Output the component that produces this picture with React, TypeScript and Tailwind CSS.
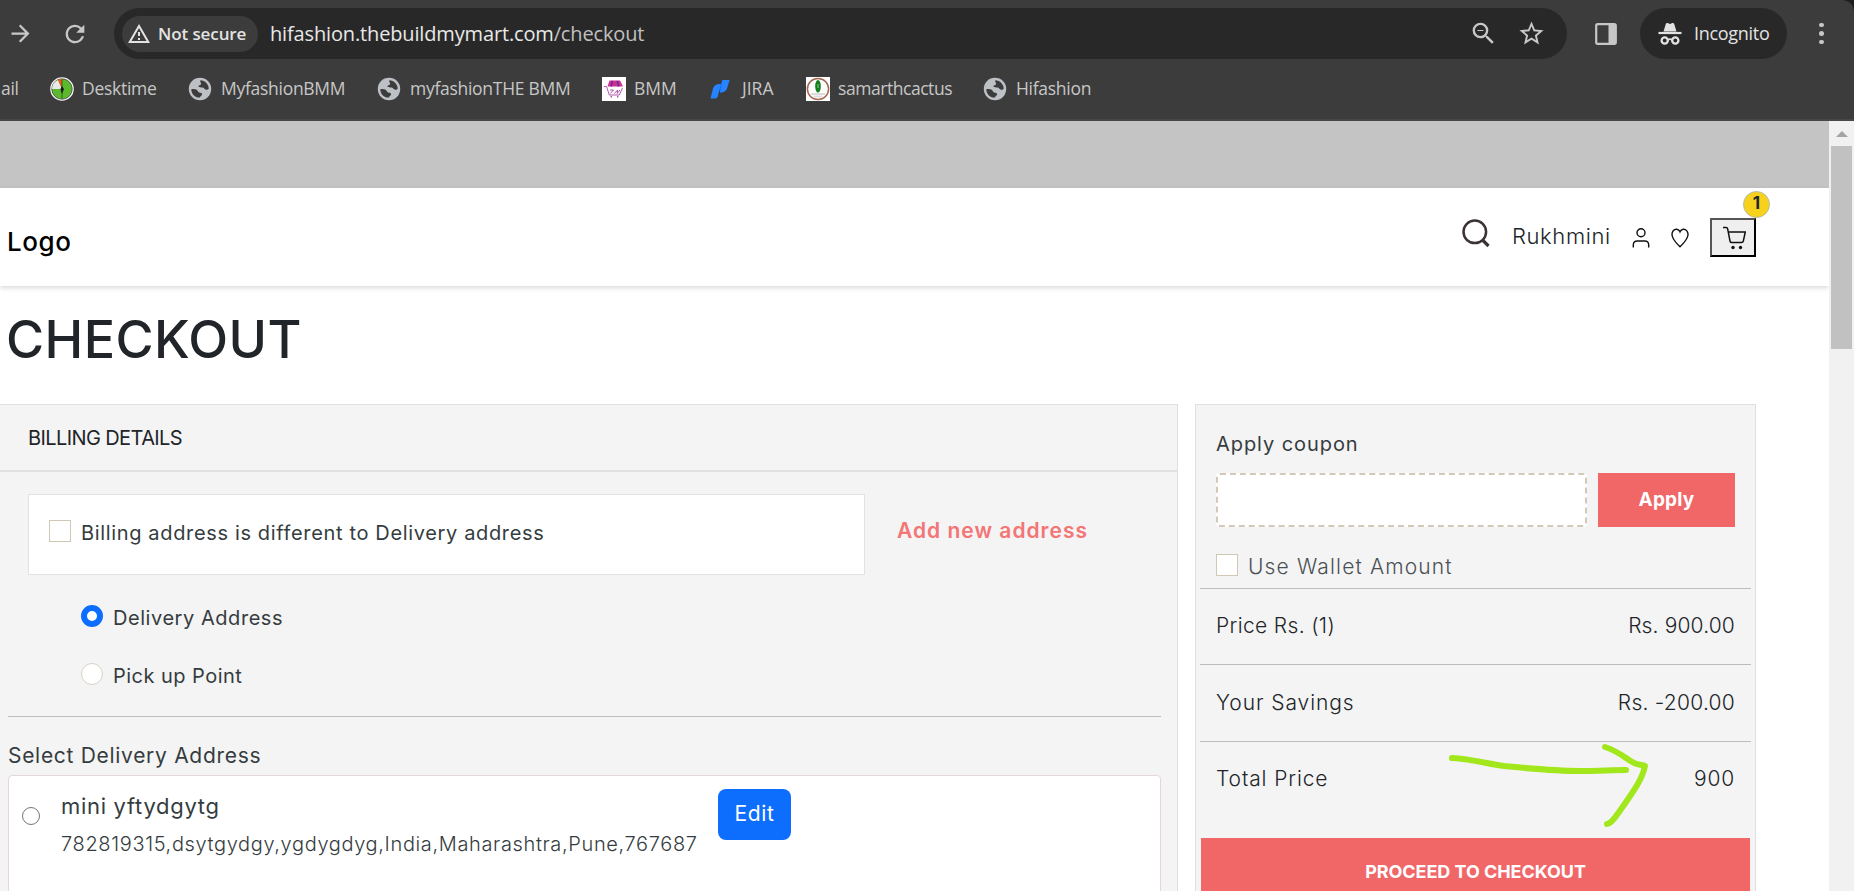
import React from "react"
import { MdArrowForward, MdRefresh, MdStarBorder, MdZoomOut, MdOutlineWarningAmber } from "react-icons/md"

const totals = [
    { label: "Price Rs. (1)", value: "Rs. 900.00", row: "h-[76px] pb-0.5", labelStyle: "tracking-[0.35px]", valueStyle: "tracking-[0.15px]" },
    { label: "Your Savings", value: "Rs. -200.00", row: "h-[77px]", labelStyle: "tracking-[0.92px]", valueStyle: "tracking-[0.25px]" },
]

function Globe() {
    return (
        <svg viewBox="0 0 24 24" className="mx-[1px] size-6 shrink-0">
            <circle cx="12" cy="12" r="11.200" fill="#bdc1c6" />
            <path d="M12.500 3.300c4.500.4 7.800 3.700 8.300 8.200-.5 1-1.500 1.500-2.800 1.300-1.600-.3-1.600-2-3.200-2.300-1.500-.3-4 .3-4.300-.9-.3-1.400 2.300-1.300 2.600-2.600.3-1.200-1.700-2.400-.6-3.700z" fill="#3c3c3c" />
            <path d="M3.300 12.300c1.800-.5 3.900-.3 5.400.5 1.300.8 1 2.200 2.500 2.600 1.500.3 3 .4 2.900 1.900-.1 1.600-1.900 1.200-2.100 3.300-4.700.3-8.700-3.500-8.700-8.300z" fill="#3c3c3c" />
        </svg>
    )
}

function DesktimeIcon() {
    return (
        <svg viewBox="0 0 24 24" className="size-6 shrink-0">
            <circle cx="12" cy="12" r="11" fill="#5cb82c" stroke="#f5f5f5" strokeWidth="1.600" />
            <circle cx="12" cy="12" r="10.200" fill="none" stroke="#333" strokeWidth="0.700" />
            <path d="M12 12H2a10 10 0 0 1 6-9z" fill="#e8e8e8" />
            <path d="M12 12L8 2.800a10 10 0 0 1 4-.8z" fill="#f4511e" />
            <path d="M12 2.500v19" stroke="#2f6b1a" strokeWidth="1" />
            <path d="M12 9l2 3-2 5-1.600-5z" fill="#1d1d1d" />
        </svg>
    )
}

function BmmIcon() {
    return (
        <svg viewBox="0 0 24 24" className="size-6 shrink-0 bg-white" fill="none" stroke="#a845a0">
            <path d="M7.500 3.500h10.500l3 6H5.500z" fill="#d0308f" stroke="none" />
            <path d="M10.300 3.800L9.300 9.500M15.300 3.800l1.200 5.700" stroke="#6a2c9c" strokeWidth="1.600" />
            <path d="M2 9.500h2.500l2.800 8.500h10l3.200-7" strokeWidth="0.900" />
            <path d="M8 13h3.500l-3 3.500M12.500 16.500l3-3.500-.3 3.500 2.800-3.500" strokeWidth="0.900" />
            <path d="M9 19l.6 1.500M16 19l-.6 1.500" strokeWidth="1.300" />
        </svg>
    )
}

function JiraIcon() {
    return (
        <svg viewBox="0 0 20 20" className="h-5 w-5 shrink-0">
            <path d="M10 13.500c4 0 6-2 6.500-5L19.500 1H12.500L9 9z" fill="#1668e3" />
            <path d="M.5 19.500L3 9.500C4 6.500 6 5 9.500 5H11L8 16.500c-.5 2-1 3-3 3z" fill="#2684ff" />
            <path d="M12.500 1h7l-2.300 8c-.8 2.800-3 4.500-7.200 4.500z" fill="#2684ff" />
        </svg>
    )
}

function CactusIcon() {
    return (
        <svg viewBox="0 0 24 24" className="size-6 shrink-0 bg-white" fill="none">
            <circle cx="12" cy="12" r="10.600" stroke="#a5644e" strokeWidth="1.500" />
            <path d="M5 17h14M7.500 19.500h9" stroke="#dcdcdc" strokeWidth="2" />
            <ellipse cx="12" cy="9.300" rx="2.800" ry="6.300" fill="#15801a" />
            <path d="M12 7v4" stroke="#9fd0a0" strokeWidth="0.900" />
        </svg>
    )
}

function IncognitoIcon() {
    return (
        <svg viewBox="0 0 24 24" className="size-6 shrink-0" fill="none" stroke="#e3e3e3">
            <path d="M5.500 9.500L7.800 2c.3-.9 1-1.200 1.800-.9L12 2l2.400-.9c.8-.3 1.500 0 1.800.9l2.300 7.500z" fill="#e3e3e3" stroke="none" />
            <path d="M.5 11h23" strokeWidth="2.200" />
            <circle cx="6.700" cy="18.500" r="3.100" strokeWidth="2.300" />
            <circle cx="17.300" cy="18.500" r="3.100" strokeWidth="2.300" />
            <path d="M9.500 18c1.500-1 3.500-1 5 0" strokeWidth="1.800" />
        </svg>
    )
}

function BrowserBar() {
    return (
        <div className="bg-[#1f1f1f]">
            <div className="h-[121px] rounded-tr-[12px] border-b-2 border-[#474747] bg-[#3c3c3c] pt-2 font-['Open_Sans','Noto_Sans',sans-serif] text-[#c7c7c7]">
                {/* Toolbar */}
                <div className="flex h-[51px] items-center">
                    <MdArrowForward className="ml-[7px] size-[27px]" />
                    <MdRefresh className="ml-[27px] size-[28px]" />
                    <div className="ml-[25px] flex h-[51px] w-[1453px] items-center rounded-full bg-[#282828] pr-[21px] pl-2">
                        <div className="flex h-9 w-[136px] items-center rounded-full bg-[#3c3c3c] pl-[5px] text-[#e3e3e3]">
                            <MdOutlineWarningAmber className="size-6" />
                            <span className="ml-[7px] text-[17px] font-semibold tracking-[-0.1px] whitespace-nowrap">Not secure</span>
                        </div>
                        <div className="ml-3 text-[20px] tracking-[-0.15px] whitespace-nowrap text-[#e8e8e8]">
                            hifashion.thebuildmymart.com<span className="text-[#c0c0c0]">/checkout</span>
                        </div>
                        <MdZoomOut className="ml-auto size-[29px]" />
                        <MdStarBorder className="ml-[19px] size-[29px]" />
                    </div>
                    <svg viewBox="0 0 22 22" className="ml-7 size-[22px]">
                        <rect x="1.200" y="1.200" width="19.600" height="19.600" rx="1.500" fill="none" stroke="#c7c7c7" strokeWidth="2.200" />
                        <path d="M13.500 1h7v20h-7z" fill="#c7c7c7" />
                    </svg>
                    <div className="ml-[23px] flex h-[51px] w-[147px] items-center rounded-full bg-[#282828] pl-[18px] text-[#e3e3e3]">
                        <IncognitoIcon />
                        <span className="ml-3 text-[18px] tracking-[-0.3px]">Incognito</span>
                    </div>
                    <div className="ml-8 flex flex-col gap-1">
                        <span className="size-[4.500px] rounded-full bg-[#c7c7c7]" />
                        <span className="size-[4.500px] rounded-full bg-[#c7c7c7]" />
                        <span className="size-[4.500px] rounded-full bg-[#c7c7c7]" />
                    </div>
                </div>

                {/* Bookmarks */}
                <div className="flex h-[59px] items-center text-[17.500px] tracking-[-0.28px] whitespace-nowrap">
                    <span className="ml-px w-[49px]">ail</span>
                    <div className="flex w-[137px] items-center gap-2"><DesktimeIcon />Desktime</div>
                    <div className="flex w-[189px] items-center gap-2"><Globe />MyfashionBMM</div>
                    <div className="flex w-[226px] items-center gap-2"><Globe />myfashionTHE BMM</div>
                    <div className="flex w-[108px] items-center gap-2 tracking-normal"><BmmIcon />BMM</div>
                    <div className="flex w-[96px] items-center gap-3 tracking-normal"><JiraIcon />JIRA</div>
                    <div className="flex w-[176px] items-center gap-2 tracking-[-0.45px]"><CactusIcon />samarthcactus</div>
                    <div className="flex items-center gap-2"><Globe />Hifashion</div>
                </div>
            </div>
        </div>
    )
}

function Header() {
    return (
        <header className="flex h-[98px] bg-white pl-[7px] shadow-[0_2px_5px_rgba(0,0,0,0.15)]">
            <div className="pt-[34px] text-[26px] leading-[40px] font-medium tracking-[0.6px] text-black">Logo</div>
            <div className="ml-auto flex pr-[73px]">
                <svg viewBox="0 0 28 29" className="mt-[31px] h-[29px] w-7" fill="none" stroke="#3b3233">
                    <circle cx="12.800" cy="12.800" r="11.300" strokeWidth="2.500" />
                    <path d="M20.500 21l6 6" strokeWidth="3.200" />
                </svg>
                <span className="mt-[33px] ml-[22px] w-[98px] text-[22px] leading-[30px] font-light tracking-[0.6px]">Rukhmini</span>
                <svg viewBox="0 0 18 20" className="mt-10 ml-[22px] h-5 w-[18px]" fill="none" stroke="#111" strokeWidth="1.400">
                    <circle cx="9" cy="4.800" r="4" />
                    <path d="M1.300 19.500v-2.500c0-2.500 1.500-4 4-4h7.400c2.500 0 4 1.500 4 4v2.500" />
                </svg>
                <svg viewBox="0 0 18 20" className="mt-10 ml-[21px] h-5 w-[18px]" fill="none" stroke="#111" strokeWidth="1.400">
                    <path d="M9 3.800C7.800.8 4 .5 2.200 2.800.4 5.200.8 8 2.200 10.500c1.600 2.900 4.100 5.600 6.800 8.300 2.700-2.700 5.200-5.400 6.800-8.300C17.200 8 17.600 5.200 15.800 2.800 14 .5 10.200.8 9 3.800z" />
                </svg>
                <div className="relative mt-[30px] ml-[21px] h-[39px] w-[46px] border-2 border-t-[#555] border-r-black border-b-black border-l-[#555] bg-[#efefef]">
                    <svg viewBox="0 0 24 24" className="mt-[6px] ml-[10px] size-6" fill="none" stroke="#111" strokeWidth="1.500">
                        <path d="M1 1.500h3.200c.8 0 1.200.4 1.400 1.200L8 15c.2 1.100.8 1.600 1.800 1.600h9.700c1 0 1.600-.5 1.800-1.400L23.300 6H6.200" />
                        <circle cx="11" cy="21.500" r="1.700" fill="#111" stroke="none" />
                        <circle cx="18.500" cy="21.500" r="1.700" fill="#111" stroke="none" />
                    </svg>
                    <span className="absolute -top-[29px] left-[31px] flex size-[27px] items-center justify-center rounded-full border border-[#b9b9a8] bg-[#f6d21c] pb-0.5 text-[17px] leading-none font-bold">
                        1
                    </span>
                </div>
            </div>
        </header>
    )
}

function BillingDetails() {
    return (
        <section className="h-[490px] w-[1178px] border-t border-r border-[#e0e0e0] bg-[#f4f4f4] text-[20px] text-[#343c40]">
            <h2 className="h-[67px] border-b-2 border-[#e2e2e2] pt-[18px] pl-7 leading-[30px] tracking-[-0.6px] text-[#212529]">BILLING DETAILS</h2>

            <div className="flex pt-[22px] pl-7">
                <label className="flex h-[81px] w-[837px] border border-[#e2e2e2] bg-white pt-[25px] pl-5">
                    <span className="size-[22px] border border-[#d0c7b7]" />
                    <span className="-mt-px ml-[10px] leading-[28px] tracking-[0.65px]">Billing address is different to Delivery address</span>
                </label>
                <a className="mt-[22px] ml-8 text-[21px] leading-[30px] font-semibold tracking-[1px] text-[#f37576]">Add new address</a>
            </div>

            {/* Delivery mode */}
            <div className="mt-px flex h-[58px] pt-[29px] pl-[81px]">
                <span className="size-[22px] rounded-full border-[6px] border-[#0d6efd] bg-white" />
                <span className="ml-[10px] leading-[26px] tracking-[0.55px]">Delivery Address</span>
            </div>
            <div className="flex h-[58px] pt-[29px] pl-[81px]">
                <span className="size-[22px] rounded-full border border-[#d9d2c6] bg-white" />
                <span className="ml-[10px] leading-[26px] tracking-[0.47px]">Pick up Point</span>
            </div>

            <div className="mt-6 ml-2 w-[1153px] border-t border-[#bcbcbc]">
                <h3 className="pt-[25px] text-[21px] leading-[28px] tracking-[0.7px]">Select Delivery Address</h3>
                <div className="mt-[5px] flex h-[120px] rounded border border-[#e6d6d9] bg-white">
                    <span className="mt-[31px] ml-[13px] size-[18px] rounded-full border border-[#767676]" />
                    <div className="ml-[21px] w-[657px] pt-4">
                        <p className="text-[22px] leading-[28px] tracking-[0.7px]">mini yftydgytg</p>
                        <p className="mt-[10px] leading-[28px] font-light tracking-[0.64px]">782819315,dsytgydgy,ygdygdyg,India,Maharashtra,Pune,767687</p>
                    </div>
                    <button className="mt-[13px] h-[51px] w-[73px] rounded-lg bg-[#0d6efd] pb-0.5 text-[21px] tracking-[0.6px] text-white">Edit</button>
                </div>
            </div>
        </section>
    )
}

function OrderSummary() {
    return (
        <section className="h-[490px] w-[561px] border border-[#e0e0e0] bg-[#f4f4f4] px-1 text-[21px] font-light text-[#212529]">
            <div className="h-[183px] px-4">
                <p className="pt-[25px] text-[20px] leading-[28px] font-normal tracking-[0.93px] text-[#343c40]">Apply coupon</p>
                <div className="mt-[15px] flex">
                    <div className="h-[54px] w-[371px] rounded border-2 border-dashed border-[#d4c8b8] bg-white" />
                    <button className="ml-[11px] w-[137px] bg-[#f16667] text-[19px] font-bold tracking-[0.2px] text-white">Apply</button>
                </div>
                <div className="mt-[27px] flex">
                    <span className="size-[22px] border border-[#d0c7b7] bg-white" />
                    <span className="ml-[10px] leading-[26px] tracking-[1.150px] text-[#4a5054]">Use Wallet Amount</span>
                </div>
            </div>

            {totals.map((item) => (
                <div key={item.label} className={`flex items-center justify-between border-t border-[#bcbcbc] px-4 ${item.row}`}>
                    <span className={item.labelStyle}>{item.label}</span>
                    <span className={item.valueStyle}>{item.value}</span>
                </div>
            ))}
            <div className="relative flex h-[97px] justify-between border-t border-[#bcbcbc] px-4 pt-[21px]">
                <span className="tracking-[0.88px]">Total Price</span>
                <span className="tracking-[0.8px]">900</span>
                {/* Marker arrow pointing at the total */}
                <svg viewBox="0 0 210 96" className="absolute top-0 left-[244px] h-24 w-[210px]" fill="none" stroke="#a2e71b" strokeWidth="6" strokeLinecap="round" strokeLinejoin="round">
                    <path d="M8 16C28 17 44 22 60 24 90 27 110 29 136 29 154 29 168 28 182 28" />
                    <path d="M161 5c13 4 20 11 29 16 5 2 9 2 11 3-3 15-15 30-26 46-6 9-10 12-12 12" />
                </svg>
            </div>
            <button className="mx-px h-[80px] w-[549px] bg-[#f16667] pt-[18px] pb-[30px] text-[18px] leading-[32px] font-bold tracking-[-0.05px] text-white">
                PROCEED TO CHECKOUT
            </button>
        </section>
    )
}

export default function App() {
    return (
        <div className="h-[891px] w-[1854px] overflow-hidden bg-white">
            <BrowserBar />
            <div className="flex h-[770px]">
                <main className="w-[1829px] overflow-hidden font-['Inter',sans-serif] text-[#212529]">
                    <div className="h-[67px] bg-[#c4c4c4]" />
                    <Header />
                    <h1 className="h-[118px] pt-6 pl-[6px] text-[52px] leading-[60px] font-medium tracking-[0.4px]">CHECKOUT</h1>
                    <div className="flex gap-[17px]">
                        <BillingDetails />
                        <OrderSummary />
                    </div>
                </main>

                {/* Scrollbar */}
                <div className="w-[25px] bg-[#f1f1f1] px-[2px]">
                    <div className="flex h-[25px] items-center justify-center">
                        <div className="border-x-[6px] border-b-[6px] border-x-transparent border-b-[#a3a3a3]" />
                    </div>
                    <div className="h-[203px] bg-[#c1c1c1]" />
                </div>
            </div>
        </div>
    )
}
